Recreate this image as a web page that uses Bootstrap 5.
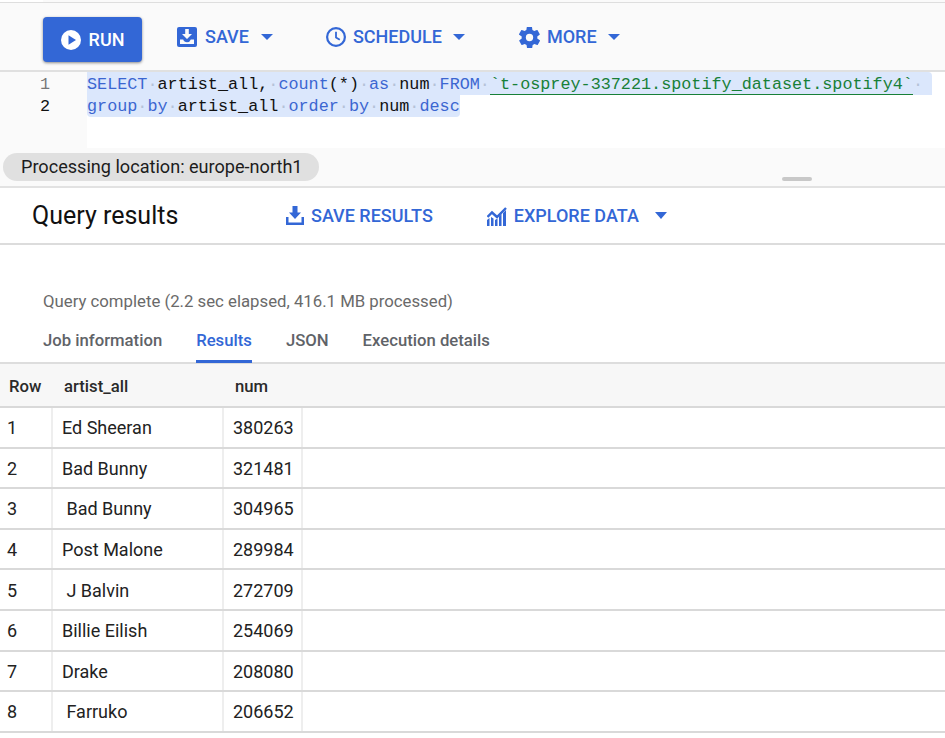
<!DOCTYPE html>
<html lang="en"><head><meta charset="utf-8"><title>Query</title>
<link rel="stylesheet" href="https://cdn.jsdelivr.net/npm/bootstrap@5.3.0/dist/css/bootstrap.min.css">
<style>
html,body{height:738px;overflow:hidden;background:#fff;font-family:Roboto,"Liberation Sans",sans-serif;}
.topedge{height:3px;background:#fafafa;border-bottom:1px solid #dedede;}
.topedge i{display:block;width:43px;height:2px;background:#fff;}
.toolbar{height:69px;background:#fafafa;border-bottom:2px solid #e0e0e0;padding:14px 0 0 43px;}
.runbtn{width:99px;height:45px;background:#3367d6;color:#fff;border:0;border-radius:4px;box-shadow:0 1px 3px rgba(0,0,0,.45);font-size:18px;font-weight:500;gap:8px;padding:0;}
.blue{color:#3367d6;font-weight:500;font-size:18px;line-height:24px;}
.tool{gap:7px;margin-top:8px;}
.tool1{margin-left:35px;gap:8px;}.tool2{margin-left:53px;}.tool3{margin-left:54px;}
.caret{width:0;height:0;border-left:6px solid transparent;border-right:6px solid transparent;border-top:6px solid #3367d6;margin-left:4px;}
.editor{height:76px;background:#fff;}
.gutter{width:87px;background:#fafafa;font-family:"Liberation Mono",monospace;font-size:16.8px;line-height:22.5px;text-align:right;padding:1.5px 37px 0 0;color:#777;}
.gutter b{font-weight:400;color:#111;display:block;}
.code{font-family:"Liberation Mono",monospace;font-size:16.8px;line-height:22.5px;color:#111;flex:1;min-width:0;}
.ln{background:#dbe7fc;white-space:pre;height:22.5px;padding-top:1.5px;line-height:21px;border-radius:0 4px 0 0;}
.ln1{width:845px;}.ln2{width:373px;border-radius:0 0 4px 4px;}
.kw{color:#3b66d1;}.ws{color:#b5c2d8;}.str{color:#188038;border-bottom:1.5px solid #188038;}
.status{height:40px;background:#fafafa;border-bottom:2px solid #e2e2e2;padding:5px 0 0 3px;position:relative;}
.loc{display:inline-block;background:#e0e0e0;border-radius:14px;height:28px;width:316px;padding-left:18px;font-size:18.1px;line-height:28px;color:#1c1c1c;}
.grip{position:absolute;left:782px;top:29px;width:30px;height:4px;border-radius:2px;background:#c8c8c8;}
.reshead{height:57px;border-bottom:2px solid #dcdcdc;padding:0 0 0 32px;}
.reshead h1{font-size:25px;font-weight:400;margin:0;width:254px;color:#111;}
.reshead .blue{gap:7px;}
.reshead .explore{margin-left:54px;}
.explore .caret{margin-left:9px;border-left-width:6.5px;border-right-width:6.5px;border-top-width:7px;}
.info{padding:46px 0 0 43px;font-size:16.75px;line-height:20px;color:#6a6a6a;height:66px;}
.tabbar{height:53px;border-bottom:2px solid #ddd;padding-left:43px;gap:34px;}
.tabx{font-size:16.7px;font-weight:500;color:#5f6368;height:52px;padding-top:18px;line-height:24px;}
.tabx.on{color:#3367d6;border-bottom:3px solid #3367d6;}
.restbl{width:100%;margin:0;table-layout:fixed;border-collapse:collapse;font-size:18px;color:#222;}
.restbl th{height:43px;background:#f7f7f7;font-weight:500;font-size:16.7px;color:#2a2a2a;border-bottom:2px solid #d9d9d9;padding:3px 0 0 12px;}
.restbl th:first-child{padding-left:9px;}
.restbl td{height:40.6px;padding:1px 0 0 9px;border-bottom:2px solid #d9d9d9;border-right:2px solid #eee;white-space:pre;}
.restbl td.c1{padding-left:7px;}
.restbl td:last-child{border-right:0;}
.c1w{width:52px;}.c2w{width:171px;}.c3w{width:79px;}
</style></head><body>
<div class="topedge"><i></i></div>
<div class="toolbar d-flex align-items-start">
<button class="runbtn d-flex align-items-center justify-content-center"><svg width="20" height="20" viewBox="0 0 20 20"><circle cx="10" cy="10" r="10" fill="#fff"/><path d="M7.5 5.2v9.6l7.5-4.8z" fill="#3367d6"/></svg>RUN</button>
<div class="blue tool tool1 d-flex align-items-center"><svg width="20" height="20" viewBox="0 0 20 20"><path d="M2 0h16a2 2 0 0 1 2 2v16a2 2 0 0 1-2 2H2a2 2 0 0 1-2-2V2a2 2 0 0 1 2-2z" fill="#3367d6"/><path d="M8.2 2h3.6v5H15l-5 5-5-5h3.200zM3 12.500h3.200a4 4 0 0 0 7.600 0H17V17H3z" fill="#fafafa"/></svg>SAVE<span class="caret"></span></div>
<div class="blue tool tool2 d-flex align-items-center"><svg width="20" height="20" viewBox="0 0 20 20"><circle cx="10" cy="10" r="8.900" fill="none" stroke="#3367d6" stroke-width="2.200"/><path d="M10 4.800v5.600l3.800 2.300" fill="none" stroke="#3367d6" stroke-width="1.800"/></svg>SCHEDULE<span class="caret"></span></div>
<div class="blue tool tool3 d-flex align-items-center"><svg width="21" height="21" viewBox="2 2 20 20"><path fill="#3367d6" d="M19.400 13a7.500 7.500 0 0 0 0-2l2.200-1.700a.5.500 0 0 0 .1-.7l-2-3.500a.5.500 0 0 0-.6-.2l-2.600 1a7.500 7.500 0 0 0-1.700-1l-.4-2.700a.5.500 0 0 0-.5-.4h-4a.5.500 0 0 0-.5.4l-.4 2.700a7.500 7.500 0 0 0-1.700 1l-2.600-1a.5.500 0 0 0-.6.2l-2 3.500a.5.500 0 0 0 .1.700L4.600 11a7.500 7.500 0 0 0 0 2l-2.200 1.700a.5.500 0 0 0-.1.700l2 3.500c.1.200.4.300.6.200l2.600-1c.5.400 1.100.700 1.700 1l.4 2.700c0 .2.200.4.500.4h4c.300 0 .500-.2.500-.4l.4-2.700c.6-.3 1.200-.6 1.700-1l2.600 1c.2.100.5 0 .6-.2l2-3.500a.5.500 0 0 0-.1-.7zM12 15.500a3.500 3.500 0 1 1 0-7 3.500 3.500 0 0 1 0 7z"/></svg>MORE<span class="caret"></span></div>
</div>
<div class="editor d-flex">
<div class="gutter">1<b>2</b></div>
<div class="code">
<div class="ln ln1"><span class="kw">SELECT</span><span class="ws">·</span>artist_all,<span class="ws">·</span><span class="kw">count</span>(*)<span class="ws">·</span><span class="kw">as</span><span class="ws">·</span>num<span class="ws">·</span><span class="kw">FROM</span><span class="ws">·</span><span class="str">`t-osprey-337221.spotify_dataset.spotify4`</span><span class="ws">·</span></div>
<div class="ln ln2"><span class="kw">group</span><span class="ws">·</span><span class="kw">by</span><span class="ws">·</span>artist_all<span class="ws">·</span><span class="kw">order</span><span class="ws">·</span><span class="kw">by</span><span class="ws">·</span>num<span class="ws">·</span><span class="kw">desc</span></div>
</div>
</div>
<div class="status"><span class="loc">Processing location: europe-north1</span><span class="grip"></span></div>
<div class="reshead d-flex align-items-center">
<h1>Query results</h1>
<div class="blue d-flex align-items-center"><svg width="18" height="19" viewBox="0 0 18 19"><path fill="#3367d6" d="M6.500 0h5v6.500H15L9 13 3 6.500h3.500zM0 11h2.500v5.500h13V11H18v8H0z"/></svg>SAVE RESULTS</div>
<div class="blue explore d-flex align-items-center"><svg width="20" height="20" viewBox="0 0 20 20"><path fill="#3367d6" d="M0 20v-6l2.500-2V20zm4 0v-9l2.500 1.500V20zm4 0v-6l2.500-1.500V20zm4 0v-9.500l2.500-2.500V20zm4 0V7l3-3V20z"/><path fill="none" stroke="#3367d6" stroke-width="2.400" d="M.5 11 5 6.500 10 11l9-9"/></svg>EXPLORE DATA<span class="caret"></span></div>
</div>
<div class="info">Query complete (2.2 sec elapsed, 416.1 MB processed)</div>
<div class="tabbar d-flex"><div class="tabx">Job information</div><div class="tabx on">Results</div><div class="tabx">JSON</div><div class="tabx">Execution details</div></div>
<table class="restbl"><colgroup><col class="c1w"><col class="c2w"><col class="c3w"><col></colgroup>
<thead><tr><th>Row</th><th>artist_all</th><th>num</th><th></th></tr></thead>
<tbody>
<tr><td class="c1">1</td><td>Ed Sheeran</td><td>380263</td><td></td></tr>
<tr><td class="c1">2</td><td>Bad Bunny</td><td>321481</td><td></td></tr>
<tr><td class="c1">3</td><td> Bad Bunny</td><td>304965</td><td></td></tr>
<tr><td class="c1">4</td><td>Post Malone</td><td>289984</td><td></td></tr>
<tr><td class="c1">5</td><td> J Balvin</td><td>272709</td><td></td></tr>
<tr><td class="c1">6</td><td>Billie Eilish</td><td>254069</td><td></td></tr>
<tr><td class="c1">7</td><td>Drake</td><td>208080</td><td></td></tr>
<tr><td class="c1">8</td><td> Farruko</td><td>206652</td><td></td></tr>
</tbody></table>
<script src="https://cdn.jsdelivr.net/npm/bootstrap@5.3.0/dist/js/bootstrap.bundle.min.js"></script>
</body></html>
